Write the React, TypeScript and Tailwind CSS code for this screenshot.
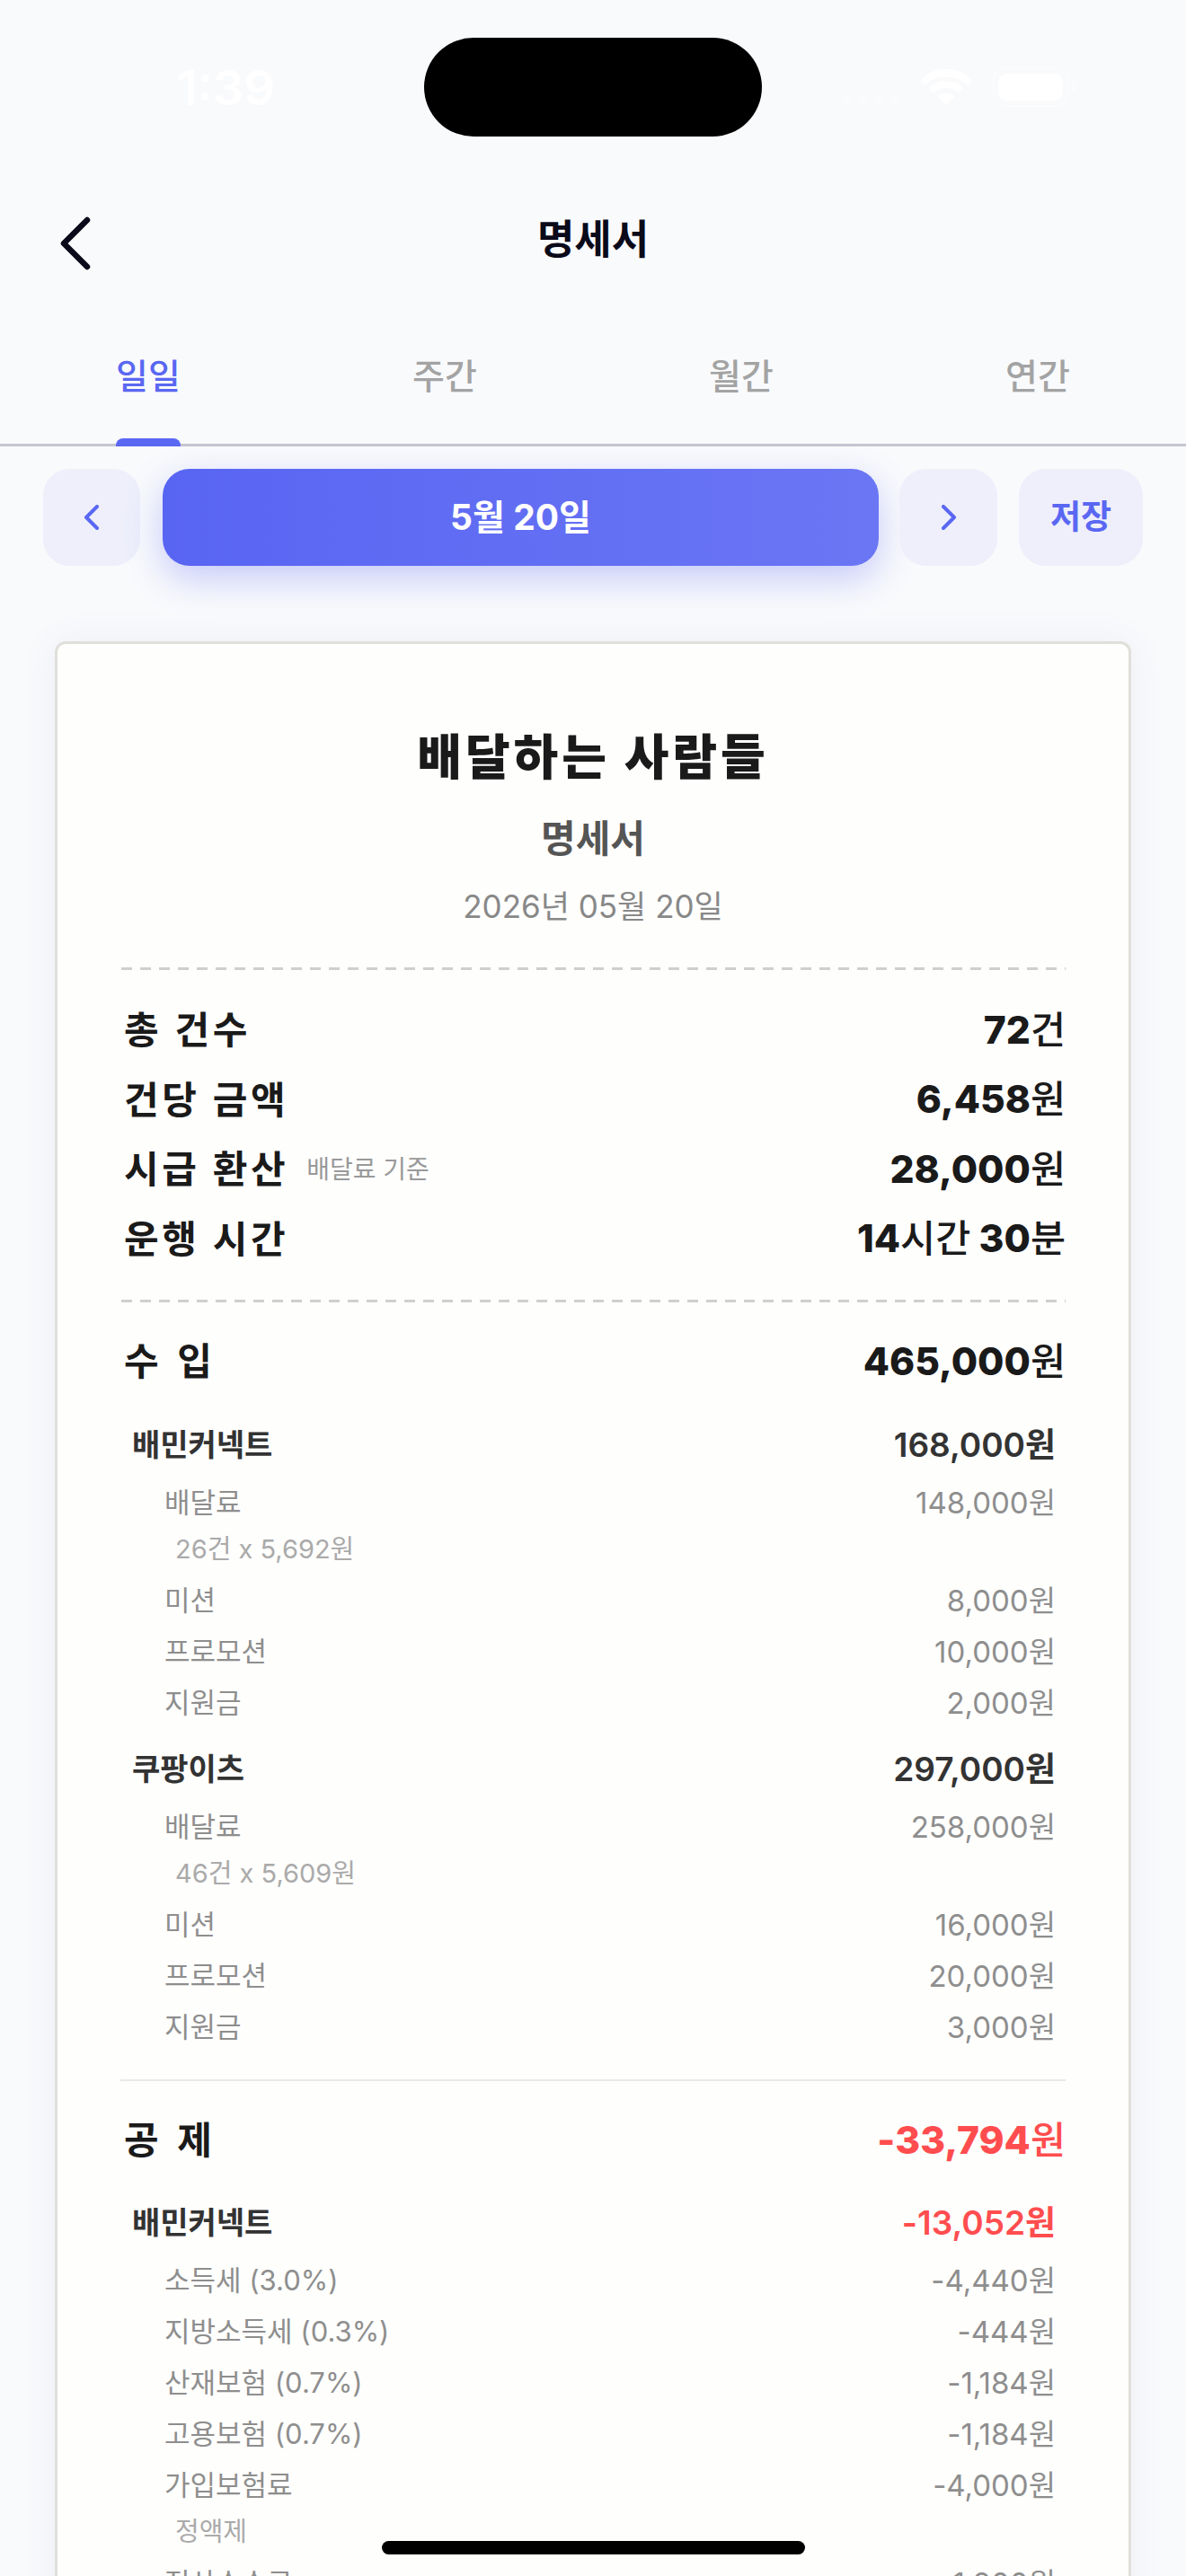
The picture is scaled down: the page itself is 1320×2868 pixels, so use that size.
const FONT = "font-['Inter','Noto_Sans_CJK_KR','Noto_Sans',sans-serif]";
const DASH = "ml-[1px] h-[3px] bg-[repeating-linear-gradient(90deg,#cfcfcf_0,#cfcfcf_12px,transparent_12px,transparent_21px)]";

function Summary({ label, children, note }: { label: string; children: React.ReactNode; note?: string }) {
  return (
    <div className="flex h-[77.5px] items-center justify-between pl-[4px] text-[#1a1a1a]">
      <div className="flex items-center">
        <span className="text-[42px] font-semibold tracking-[3.6px]">{label}</span>
        {note && <span className="ml-[20px] text-[28px] text-[#999999]">{note}</span>}
      </div>
      <div className="text-[42.5px] font-extrabold">{children}</div>
    </div>
  );
}

function Won({ n, u = "원" }: { n: string; u?: string }) {
  return (
    <>
      {n}
      <span className="font-medium">{u}</span>
    </>
  );
}

function Section({ label, value, red }: { label: string; value: string; red?: boolean }) {
  return (
    <div className="flex h-[77px] items-center justify-between pl-[4px]">
      <span className="text-[42px] font-semibold tracking-[5px] text-[#1a1a1a]">{label}</span>
      <span className={`text-[42.5px] font-extrabold ${red ? "text-[#ff4d4f]" : "text-[#1a1a1a]"}`}>
        <Won n={value} />
      </span>
    </div>
  );
}

function Group({ label, value, red }: { label: string; value: string; red?: boolean }) {
  return (
    <div className="mb-[8px] flex h-[57px] items-center justify-between pl-[13px] pr-[11px]">
      <span className="text-[34px] font-semibold text-[#333333]">{label}</span>
      <span className={`text-[37px] font-semibold ${red ? "text-[#ff4d4f]" : "text-[#333333]"}`}>{value}</span>
    </div>
  );
}

function Item({ label, value, note }: { label: string; value: string; note?: string }) {
  return (
    <div>
      <div className="flex h-[57px] items-center justify-between pl-[49px] pr-[11px] text-[#8e8e8e]">
        <span className="text-[31px]">{label}</span>
        <span className="text-[33px]">{value}</span>
      </div>
      {note && <div className="mb-[6px] flex h-[46px] items-center pl-[61px] text-[29px] text-[#aaaaaa]">{note}</div>}
    </div>
  );
}

export default function App() {
  return (
    <div className={`relative h-[2868px] w-[1320px] overflow-hidden bg-[#f9fafc] ${FONT}`}>
      <div className="absolute left-[472px] top-[42px] h-[110px] w-[376px] rounded-[55px] bg-black" />
      <div className="absolute left-[425px] top-[2829px] z-10 h-[15px] w-[471px] rounded-full bg-black" />

      <div className="flex h-[190px] items-start justify-between pl-[197px] pr-[122px] pt-[70px] text-white">
        <span className="text-[54px] font-semibold leading-[56px]">1:39</span>
        <div className="flex items-end gap-[22px] pt-[5px]">
          <div className="flex gap-[6px] opacity-30">
            <div className="h-[12px] w-[12px] rounded-full bg-white" />
            <div className="h-[12px] w-[12px] rounded-full bg-white" />
            <div className="h-[12px] w-[12px] rounded-full bg-white" />
            <div className="h-[12px] w-[12px] rounded-full bg-white" />
          </div>
          <svg width="58" height="42" viewBox="0 0 60 44" fill="currentColor">
            <path d="M30 0C18 0 8 4 0 13l5 6c7-7 15-10 25-10s18 3 25 10l5-6C52 4 42 0 30 0Z" />
            <path d="M30 14c-8 0-15 3-20 8l5 6c4-4 9-6 15-6s11 2 15 6l5-6c-5-5-12-8-20-8Z" />
            <path d="M30 28c-4 0-7 1-10 4l10 10 10-10c-3-3-6-4-10-4Z" />
          </svg>
          <svg width="94" height="44" viewBox="0 0 94 44" fill="currentColor">
            <rect x="7" y="7" width="72" height="30" rx="9" />
            <rect x="1.5" y="1" width="83" height="42" rx="13" fill="none" stroke="currentColor" strokeOpacity="0.4" strokeWidth="2" />
            <rect x="88" y="15" width="5" height="13" rx="2.5" opacity="0.4" />
          </svg>
        </div>
      </div>

      <div className="relative flex h-[150px] items-center justify-center pt-[3px]">
        <svg className="absolute left-[66px] top-[51px]" width="36" height="60" viewBox="0 0 36 60" fill="none" stroke="#0a0a1a" strokeWidth="6.5" strokeLinecap="round" strokeLinejoin="round">
          <path d="M31 4 5 30l26 26" />
        </svg>
        <span className="text-[45px] font-bold text-[#0a0a1a]">명세서</span>
      </div>

      <div className="grid h-[157px] grid-cols-4 border-b-[3px] border-[#c5c6d0]">
        {["일일", "주간", "월간", "연간"].map((t, i) => (
          <div key={t} className="relative flex justify-center pt-[54px]">
            <span className={`text-[39px] font-medium leading-[50px] ${i === 0 ? "text-[#5a67f2]" : "text-[#a3a3a3]"}`}>{t}</span>
            {i === 0 && <div className="absolute bottom-[-3px] left-1/2 h-[9px] w-[72px] -translate-x-1/2 rounded-t-[8px] bg-[#5a67f2]" />}
          </div>
        ))}
      </div>

      <div className="mt-[25px] flex h-[108px] px-[48px]">
        <button className="flex w-[108px] items-center justify-center rounded-[30px] bg-[#eeeffb]">
          <svg width="18" height="28" viewBox="0 0 18 28" fill="none" stroke="#5a67f2" strokeWidth="4" strokeLinecap="round" strokeLinejoin="round">
            <path d="M15 2 3 14l12 12" />
          </svg>
        </button>
        <button className="ml-[25px] flex w-[797px] items-center justify-center rounded-[30px] bg-gradient-to-r from-[#5865f2] to-[#6b76f4] text-[39px] font-bold text-white shadow-[0_14px_40px_rgba(90,103,242,0.32)]">
          5월 20일
        </button>
        <button className="ml-[23px] flex w-[109px] items-center justify-center rounded-[30px] bg-[#eeeffb]">
          <svg width="18" height="28" viewBox="0 0 18 28" fill="none" stroke="#5a67f2" strokeWidth="4" strokeLinecap="round" strokeLinejoin="round">
            <path d="M3 2l12 12L3 26" />
          </svg>
        </button>
        <button className="ml-[24px] flex w-[138px] items-center justify-center rounded-[30px] bg-[#eeeffb] text-[37px] font-semibold text-[#5a67f2]">
          저장
        </button>
      </div>

      <div className="mx-[61px] mt-[84px] rounded-[12px] border-[3px] border-[#e0dfda] bg-[#fefefd] px-[70px] pb-[100px] pt-[87px] shadow-[0_0_40px_rgba(70,90,150,0.07)]">
        <div className="text-center text-[54px] font-extrabold leading-[80px] tracking-[4px] text-[#1a1a1a]">배달하는 사람들</div>
        <div className="mt-[20px] text-center text-[42px] font-semibold leading-[60px] text-[#555555]">명세서</div>
        <div className="mt-[20px] text-center text-[35px] leading-[50px] text-[#888888]">2026년 05월 20일</div>
        <div className={`mt-[43px] ${DASH}`} />
        <div className="mt-[28px]">
          <Summary label="총 건수"><Won n="72" u="건" /></Summary>
          <Summary label="건당 금액"><Won n="6,458" /></Summary>
          <Summary label="시급 환산" note="배달료 기준"><Won n="28,000" /></Summary>
          <Summary label="운행 시간">14<span className="font-medium">시간</span> 30<span className="font-medium">분</span></Summary>
        </div>
        <div className={`mt-[29px] ${DASH}`} />
        <div className="mt-[27px]"><Section label="수 입" value="465,000" /></div>
        <div className="mt-[26px]">
          <Group label="배민커넥트" value="168,000원" />
          <Item label="배달료" value="148,000원" note="26건 x 5,692원" />
          <Item label="미션" value="8,000원" />
          <Item label="프로모션" value="10,000원" />
          <Item label="지원금" value="2,000원" />
        </div>
        <div className="mt-[16px]">
          <Group label="쿠팡이츠" value="297,000원" />
          <Item label="배달료" value="258,000원" note="46건 x 5,609원" />
          <Item label="미션" value="16,000원" />
          <Item label="프로모션" value="20,000원" />
          <Item label="지원금" value="3,000원" />
        </div>
        <div className="mt-[29px] border-t-2 border-[#e8e8e8]" />
        <div className="mt-[27px]"><Section label="공 제" value="-33,794" red /></div>
        <div className="mt-[25px]">
          <Group label="배민커넥트" value="-13,052원" red />
          <Item label="소득세 (3.0%)" value="-4,440원" />
          <Item label="지방소득세 (0.3%)" value="-444원" />
          <Item label="산재보험 (0.7%)" value="-1,184원" />
          <Item label="고용보험 (0.7%)" value="-1,184원" />
          <Item label="가입보험료" value="-4,000원" note="정액제" />
          <Item label="정산수수료" value="-1,800원" />
        </div>
      </div>
    </div>
  );
}
